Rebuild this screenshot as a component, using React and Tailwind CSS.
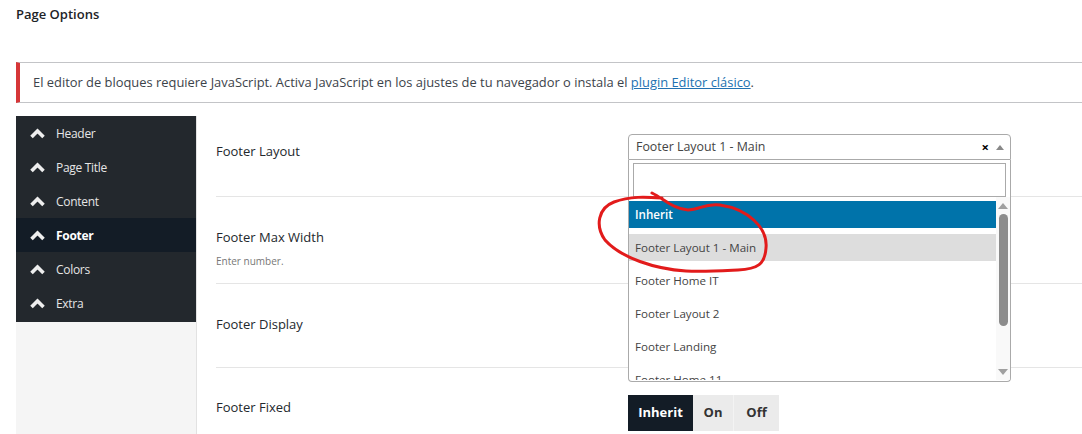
const menu = ['Header', 'Page Title', 'Content', 'Footer', 'Colors', 'Extra']
const options = ['Inherit', 'Footer Layout 1 - Main', 'Footer Home IT', 'Footer Layout 2', 'Footer Landing', 'Footer Home 11']

function Chevron() {
  return (
    <svg width="17" height="11" viewBox="0 0 17 11" className="mr-[10px] shrink-0">
      <polyline points="2.5,9 8.5,3 14.5,9" fill="none" stroke="#eee" strokeWidth="3.6" strokeLinejoin="miter" />
    </svg>
  )
}

function Dropdown() {
  return (
    <div className="absolute left-0 top-[26px] w-[383px] h-[222px] bg-white border border-t-0 border-[#aaa] rounded-b-[4px] overflow-hidden z-10">
      <div className="px-[4px] pt-[3px]">
        <div className="h-[34px] border border-[#aaa] bg-white"></div>
      </div>
      <div className="flex h-[183px]">
        <div className="flex-1 overflow-hidden pt-[1px]">
          {options.map((o, i) => (
            <div key={o} className="h-[33px] py-[3px]">
              <div
                className={`h-[27px] flex items-center px-[6px] text-[11.6px] ${
                  i === 0 ? 'bg-[#0073aa] text-white font-semibold' : i === 1 ? 'bg-[#ddd] text-[#444]' : 'text-[#444]'
                }`}
              >
                {o}
              </div>
            </div>
          ))}
        </div>
        <div className="w-[14px] bg-[#f9f9f9] flex flex-col items-center">
          <div className="mt-[6px] w-0 h-0 border-l-[5px] border-r-[5px] border-b-[6px] border-l-transparent border-r-transparent border-b-[#a0a0a0]"></div>
          <div className="mt-[5px] w-[9px] h-[112px] rounded-full bg-[#8c8c8c]"></div>
          <div className="mt-auto mb-[5px] w-0 h-0 border-l-[5px] border-r-[5px] border-t-[6px] border-l-transparent border-r-transparent border-t-[#a0a0a0]"></div>
        </div>
      </div>
    </div>
  )
}

export default function App() {
  return (
    <div className="relative w-full h-[434px] overflow-hidden bg-white text-[#1d2327]" style={{ fontFamily: '"Open Sans", "Noto Sans", sans-serif' }}>
      <div className="pl-4">
        {/* Header */}
        <div className="h-[30px] pt-[5px] text-[13px] font-semibold text-[#1d2327]">Page Options</div>

        {/* Notice */}
        <div className="mt-[32px] h-[41px] flex items-center border-y border-[#c3c4c7] border-l-[4px] border-l-[#d63638] pl-[13px] text-[12.9px] text-[#3c434a] whitespace-nowrap">
          <span>
            El editor de bloques requiere JavaScript. Activa JavaScript en los ajustes de tu navegador o instala el{' '}
            <a href="#" className="text-[#2271b1] underline">plugin Editor clásico</a>.
          </span>
        </div>

        {/* Metabox */}
        <div className="mt-[13px] flex">
          <div className="w-[181px] shrink-0 bg-[#f5f5f5] h-[320px] border-r border-[#e2e2e2]">
            <div className="bg-[#23282d] pb-[2px]">
              {menu.map(m => (
                <div
                  key={m}
                  className={`h-[34px] flex items-center pl-[13px] pt-[1px] text-[12px] tracking-[-0.3px] ${
                    m === 'Footer' ? 'bg-[#131c26] text-white font-bold' : 'text-[#e6e6e6]'
                  }`}
                >
                  <Chevron />
                  {m}
                </div>
              ))}
            </div>
          </div>

          <div className="flex-1 pl-[19px]">
            {/* Footer Layout */}
            <div className="h-[81px] flex border-b border-[#e5e5e5]">
              <div className="w-[412px] pt-[26px] text-[13px] text-[#23282d]">Footer Layout</div>
              <div className="pt-[18px]">
                <div className="relative">
                  <div className="w-[383px] h-[26px] border border-[#aaa] rounded-t-[4px] flex items-center pl-[7px] pr-[6px] text-[12.4px] text-[#444]">
                    <span className="flex-1">Footer Layout 1 - Main</span>
                    <span className="text-[13px] font-bold text-black mr-[7px] leading-none">×</span>
                    <span className="w-0 h-0 border-l-[4px] border-r-[4px] border-b-[5px] border-l-transparent border-r-transparent border-b-[#888]"></span>
                  </div>
                  <Dropdown />
                </div>
              </div>
            </div>

            {/* Footer Max Width */}
            <div className="h-[87px] border-b border-[#e5e5e5] pt-[31px]">
              <div className="text-[13px] text-[#23282d]">Footer Max Width</div>
              <div className="mt-[6px] text-[10px] text-[#777]">Enter number.</div>
            </div>

            {/* Footer Display */}
            <div className="h-[84px] border-b border-[#e5e5e5] pt-[31px]">
              <div className="text-[13px] text-[#23282d]">Footer Display</div>
            </div>

            {/* Footer Fixed */}
            <div className="flex">
              <div className="w-[412px] pt-[30px] text-[13px] text-[#23282d]">Footer Fixed</div>
              <div className="pt-[27px] flex text-[13px] font-bold">
                <div className="h-[36px] w-[65px] flex items-center justify-center bg-[#131c26] text-white">Inherit</div>
                <div className="h-[36px] w-[41px] flex items-center justify-center bg-[#ebebeb] text-[#333] border-r border-[#f3f3f3]">On</div>
                <div className="h-[36px] w-[45px] flex items-center justify-center bg-[#ebebeb] text-[#333]">Off</div>
              </div>
            </div>
          </div>
        </div>
      </div>

      {/* Red annotation */}
      <svg className="absolute left-0 top-0 pointer-events-none z-20" width="1082" height="434">
        <path
          d="M652 193 C664 199, 674 209, 688 210 C700 210, 704 203, 720 205 C748 209, 768 228, 766 248 C765 264, 758 269, 738 270 C718 271, 702 272, 686 271 C655 269, 621 258, 605 240 C595 226, 598 208, 614 202 C630 196, 646 197, 662 198"
          fill="none"
          stroke="#e21b1b"
          strokeWidth="3"
          strokeLinecap="round"
        />
      </svg>
    </div>
  )
}
